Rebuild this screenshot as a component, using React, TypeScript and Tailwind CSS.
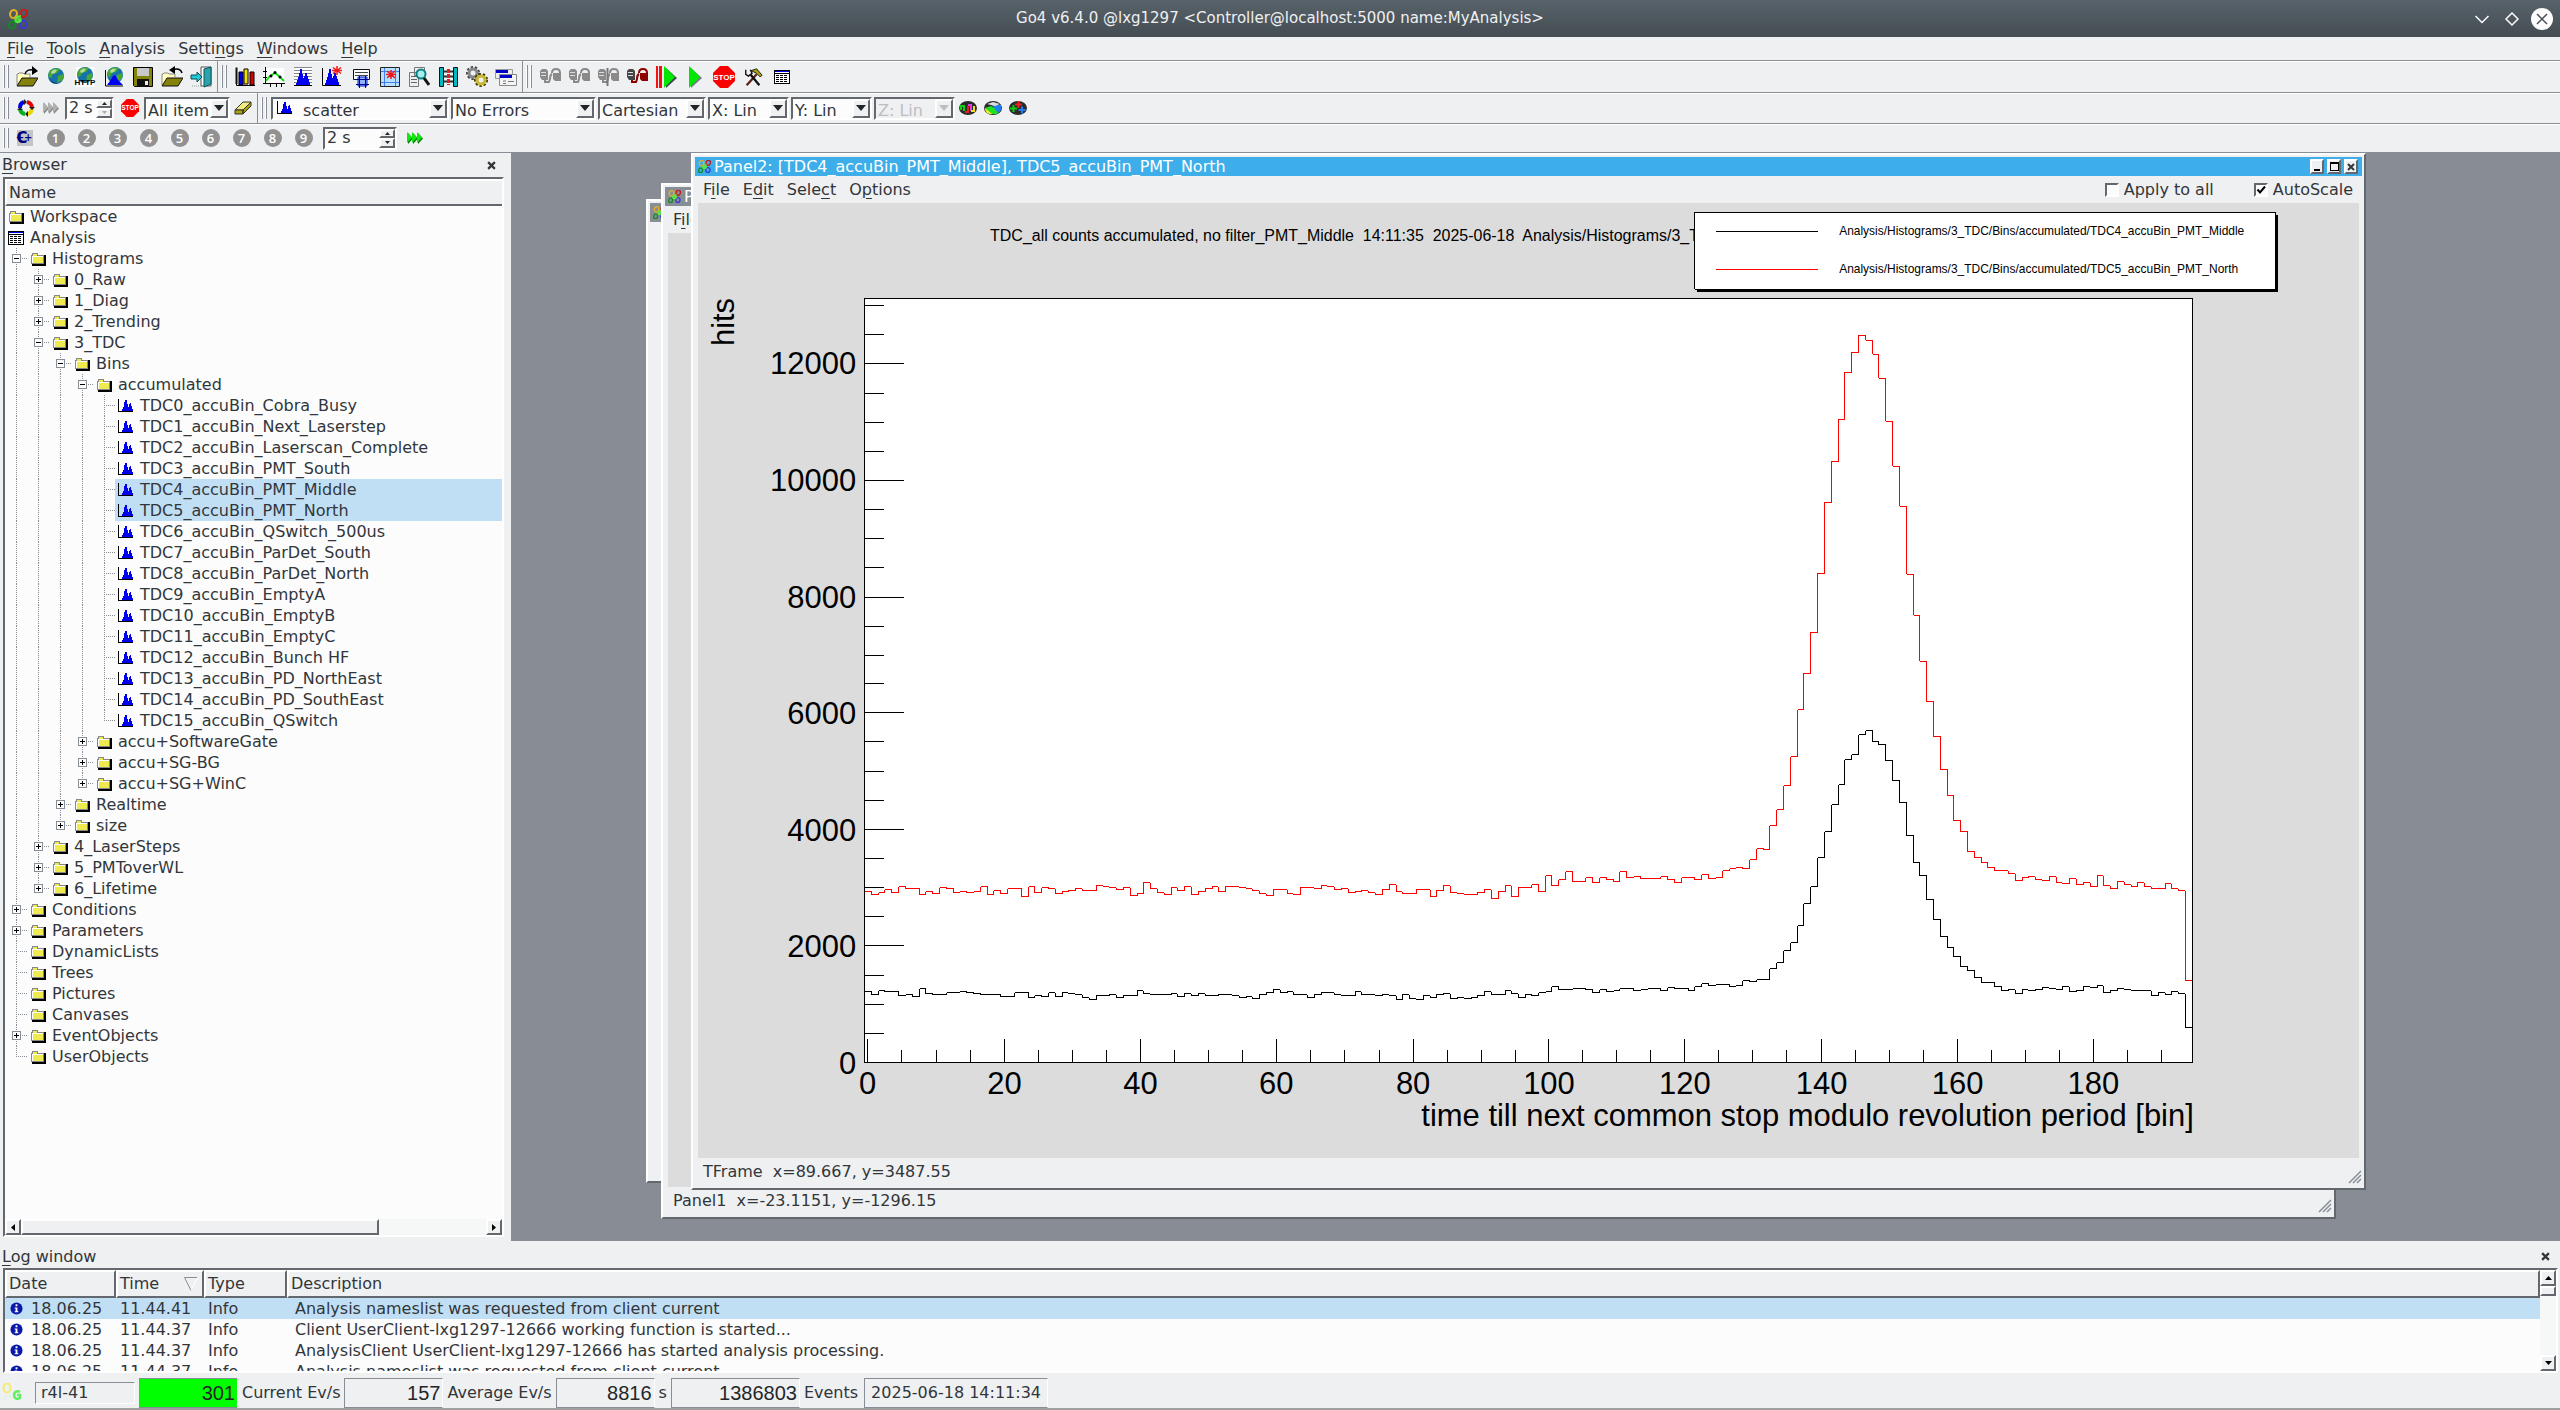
import React from 'react';
import clsx from 'clsx';

const sunken =
  'border-2 border-t-[#63686e] border-l-[#63686e] border-r-white border-b-white';
const raised =
  'border-2 border-t-white border-l-white border-r-[#63686e] border-b-[#63686e]';

/* ---------- icons ---------- */

type IconProps = { size?: number; box?: number; children: React.ReactNode };

function Icon({ size = 22, box = 22, children }: IconProps) {
  return (
    <svg width={size} height={size} viewBox={`0 0 ${box} ${box}`} className="shrink-0" aria-hidden="true">
      {children}
    </svg>
  );
}

function Go4Logo({ size = 20 }: { size?: number }) {
  return (
    <Icon size={size} box={20}>
      <g fill="none" strokeWidth="2">
        <ellipse cx="5.5" cy="5" rx="3.4" ry="4" stroke="#e8b020" transform="rotate(15 5.5 5)" />
        <ellipse cx="15.8" cy="4.2" rx="3.2" ry="3.8" stroke="#c81818" transform="rotate(20 15.8 4.2)" />
        <ellipse cx="4" cy="16" rx="3" ry="3.6" stroke="#128a22" transform="rotate(15 4 16)" />
        <ellipse cx="15.2" cy="15.5" rx="3.2" ry="3.8" stroke="#3838d8" transform="rotate(15 15.2 15.5)" />
        <path d="M13 7.500C10 7 7.500 9 7.500 11s3 3 5 1v-1.500h-3" stroke="#5ae83c" strokeWidth="2.400" />
      </g>
    </Icon>
  );
}

function OpenIcon({ back = false }: { back?: boolean }) {
  return (
    <Icon>
      <path d="M1 19V8h1l1-1h4l1 1h6v3" fill="#ffffc0" stroke="#888" />
      <path d="M1 20l5-8h16l-5 8z" fill="#84820a" stroke="#111" />
      {back ? (
        <path d="M21 7c-1-4-5-5-9-3" fill="none" stroke="#000" strokeWidth="1.500" />
      ) : (
        <path d="M9 8c1-4 5-5 9-4" fill="none" stroke="#000" strokeWidth="1.500" />
      )}
      {back ? <path d="M14 0L8 4l6 4z" /> : <path d="M16 0l6 5-6 4z" />}
    </Icon>
  );
}

function Globe({ r = 8, cx = 11, cy = 10 }: { r?: number; cx?: number; cy?: number }) {
  return (
    <g transform={`translate(${cx} ${cy}) scale(${r / 8})`}>
      <circle r="8" fill="#1672ac" />
      <path d="M-6-5C-3-8 2-8 4-6.500L1-3l-4 1-2 4-2.500-1C-8-2-7-4-6-5zM2 0l5-2c1.500 3 0 6-2 7L1 7z" fill="#46a636" />
      <path d="M-5-4C-3-7 0-7 1-6L-1-3l-3 1z" fill="#b8dc90" />
      <path d="M-6 3c2 3 5 4 8 4-3 1.500-7 0-8-4z" fill="#0d3c66" />
    </g>
  );
}

const HIST = 'M3 19h1v-2h1v-3h1v-3h1V7h1V3h2v5h1v4h1v-2h1V7h2v3h1v3h1v3h1v3z';

function HistIcon({ size = 16 }: { size?: number }) {
  return (
    <Icon size={size} box={16}>
      <g shapeRendering="crispEdges">
        <path d="M3 13h1v-2h1V9h1V4h1V2h2v4h1v3h1V6h1V5h1v3h1v3h1v2z" fill="#0000f0" />
        <path d="M0 1h1v12h14v1H0z" />
      </g>
    </Icon>
  );
}

function FolderIcon() {
  return (
    <Icon size={16} box={16}>
      <g shapeRendering="crispEdges">
        <path d="M15 4v10H2" fill="none" stroke="#000" strokeWidth="2" />
        <path d="M1.500 12.500V4.500h1V2.500h5v2h6v8z" fill="#eeea50" stroke="#888" />
        <path d="M3 5.500h10M2.500 5v7" stroke="#fff" fill="none" />
      </g>
    </Icon>
  );
}

function TableIcon() {
  return (
    <Icon size={16} box={16}>
      <g shapeRendering="crispEdges">
        <rect x=".5" y="1.500" width="15" height="13" fill="#fff" stroke="#000" />
        <path d="M1 2.500h14" stroke="#0000f0" />
        <path d="M1 4.500h14" stroke="#000" />
        <path d="M2 6.500h12M2 8.500h12M2 10.500h12M2 12.500h12" stroke="#000" strokeDasharray="3 1" />
      </g>
    </Icon>
  );
}

function StopIcon({ size = 22 }: { size?: number }) {
  return (
    <Icon size={size}>
      <path d="M7 0h8l7 7v8l-7 7H7l-7-7V7z" fill="#fa0000" />
      <text x="11" y="14" textAnchor="middle" fontSize="8" fontWeight="700" fill="#fff" fontFamily="Liberation Sans, sans-serif">
        STOP
      </text>
    </Icon>
  );
}

function Plug({ color = '#8a8a8a', plug = '#8a8a8a', bar = false }) {
  return (
    <Icon>
      <path d="M1 5l2-2h4l2 2v9H3l-2-3z" fill={color} />
      <path d="M2 6.500h5M2 9.500h5" stroke="#ddd" />
      <path d="M6 14v2h4l1-3c0-2 0-4 2-5M13 7c0-3 2-4 4-4s4 1 4 4" fill="none" stroke={plug} strokeWidth="2" />
      <path d="M14 7h8v8h-6l-2-2z" fill={plug} />
      {bar && <path d="M10.500 2v18" stroke="#777" strokeWidth="2" />}
    </Icon>
  );
}

function FastForward({ color, edge }: { color: string; edge: string }) {
  return (
    <Icon size={16} box={16}>
      {[0, 5, 10].map((x) => (
        <g key={x}>
          <path d={`M${x + 1} 3v11l5-5.500z`} fill={edge} />
          <path d={`M${x} 2v11l5-5.500z`} fill={color} />
        </g>
      ))}
    </Icon>
  );
}

function Recycle() {
  return (
    <Icon size={18} box={18}>
      <g fill="none" strokeWidth="4">
        <path d="M3 9a6 6 0 0 1 4-6" stroke="#0000e8" />
        <path d="M10 3a6 6 0 0 1 5 6" stroke="#e80000" />
        <path d="M15 10a6 6 0 0 1-5 5" stroke="#e8d800" />
        <path d="M8 15a6 6 0 0 1-5-5" stroke="#00b020" />
      </g>
      <path d="M7 0l3 3-3 3zM18 8l-3 3-3-3zM11 18l-3-3 3-3zM0 11l3-3 3 3z" fill="#222" />
    </Icon>
  );
}

function Eraser() {
  return (
    <Icon size={18} box={18}>
      <path d="M1 11L9 3h8l-8 8z" fill="#f0ec80" stroke="#333" />
      <path d="M1 11h8v4H1zM9 11l8-8v4l-8 8z" fill="#a8a010" stroke="#333" />
    </Icon>
  );
}

const fileIcons: [string, React.ReactNode][] = [
  ['Open file', <OpenIcon />],
  ['Open remote', <Icon><Globe /></Icon>],
  [
    'Open http',
    <Icon>
      <rect x="2" y="1" width="18" height="20" fill="#fff" />
      <Globe cy={9} />
      <text x="11" y="19" textAnchor="middle" fontSize="8" fontWeight="700" fontFamily="Liberation Sans, sans-serif">
        HTTP
      </text>
    </Icon>,
  ],
  [
    'Hist server',
    <Icon>
      <Globe cy={9} cx={12} />
      <path d="M4 19l3-4 3-5 2-1 3 5 5 5z" fill="#0000f0" />
      <path d="M2.500 4v16H20" fill="none" stroke="#000" />
    </Icon>,
  ],
  [
    'Save',
    <Icon>
      <path d="M1.500 1.500h19v19h-18l-1-1z" fill="#84820a" stroke="#000" />
      <path d="M5 2h12v8H5z" fill="#c8c8c8" />
      <path d="M5 13h12v8H5z" fill="#111" />
      <path d="M13 15h3v4h-3z" fill="#eee" />
    </Icon>,
  ],
  ['Close files', <OpenIcon back />],
  [
    'Exit',
    <Icon>
      <path d="M11 1h10v19H11z" fill="#fff" stroke="#555" />
      <path d="M14 3l7-2v17l-7 3z" fill="#2aa4ac" stroke="#0a555a" />
      <path d="M1 9h6V6l5 5-5 5v-3H1z" fill="#20c8d8" stroke="#05505a" />
      <path d="M2 20h9" stroke="#999" strokeDasharray="1 1" />
    </Icon>,
  ],
];

const panelIcons: [string, React.ReactNode][] = [
  [
    'New view panel',
    <Icon>
      <path d="M2.500 3v16.500H21" fill="none" stroke="#000" />
      <path d="M5 6h4v13H5z" fill="#0000e8" stroke="#000" />
      <path d="M10 3h4v15h-4z" fill="#f4e000" stroke="#000" />
      <path d="M16 6h4v13h-4z" fill="#d80000" stroke="#000" />
      <path d="M1.500 1.500h2V18h-2z" fill="#111" />
    </Icon>,
  ],
  [
    'Fit panel',
    <Icon>
      <path d="M1 2h20v15H1z" fill="#fff" />
      <path d="M2.500 1v17M0 17.500h22M0 5.500h4M0 11.500h4M7.500 17v4M13.500 17v4M18.500 17v4" stroke="#000" />
      <path d="M3 15l4-5 5-3 5 4 4 4" fill="none" stroke="#10e010" strokeWidth="2" />
      <circle cx="8" cy="10" r="1.500" />
      <circle cx="12" cy="6.500" r="1.500" />
      <circle cx="17" cy="11" r="1.500" />
    </Icon>,
  ],
  [
    'Histogram properties',
    <Icon>
      <path d="M2 1h18v18H2z" fill="#fff" />
      <path d="M2 1.500h18M2 4.500h18M2 7.500h18M2 10.500h18M2 13.500h18M2 16.500h18" stroke="#888" />
      <path d={HIST} fill="#0000f0" />
      <path d="M2 19.500h18" stroke="#000" />
    </Icon>,
  ],
  [
    'New histogram',
    <Icon>
      <path d={HIST} fill="#0000f0" />
      <path d="M1.500 2v17.500H20" fill="none" stroke="#000" />
      <path d="M16 0v9M12 1.500l8 6M20 1.500l-8 6M11 4.500h10" stroke="#f01818" strokeWidth="1.500" />
    </Icon>,
  ],
  [
    'Conditions',
    <Icon>
      <path d="M3.500 3.500h16v10h-16z" fill="#fff" stroke="#111" />
      <path d="M5 6.500h13M5 9.500h13" stroke="#444" />
      <path d="M8 11h9v9H8z" fill="#90b0f8" stroke="#0020d0" />
      <path d="M6 13.500h13M6 18.500h13M9.500 10v12M15.500 10v12" stroke="#000090" />
    </Icon>,
  ],
  [
    'New condition',
    <Icon>
      <path d="M1.500 1.500h19v19h-19z" fill="#b8e0fc" stroke="#222" />
      <path d="M5.500 2v18M16.500 2v18M2 5.500h18M2 16.500h18" stroke="#4080e8" />
      <path d="M12 4v9M8 5l8 7M16 5l-8 7M7 8.500h10" stroke="#f01818" strokeWidth="1.500" />
    </Icon>,
  ],
  [
    'Event information',
    <Icon>
      <path d="M1.500 6.500h9v14h-9zM6.500 1.500h10v8h-10z" fill="#eee" stroke="#777" />
      <path d="M3 10.500h6M3 13.500h6M3 16.500h6" stroke="#666" />
      <circle cx="13" cy="8" r="4.500" fill="#a8ecec" stroke="#0c8080" strokeWidth="2" />
      <path d="M16 12l5 7" stroke="#111" strokeWidth="3" />
    </Icon>,
  ],
  [
    'Mbs monitor',
    <Icon>
      <path d="M2.500 1.500h4v19h-4zM16.500 1.500h4v19h-4z" fill="#00b8c0" stroke="#111" />
      <path d="M7 5.500h9M7 10.500h9M7 15.500h9" stroke="#333" strokeWidth="2" />
      <path d="M11.500 3v16" stroke="#e02020" strokeWidth="3" strokeDasharray="4 1" />
    </Icon>,
  ],
  [
    'Analysis configuration',
    <Icon>
      <circle cx="7" cy="7" r="5" fill="none" stroke="#444" strokeWidth="4" strokeDasharray="2 1.500" />
      <circle cx="7" cy="7" r="4" fill="none" stroke="#888" strokeWidth="3" />
      <circle cx="15" cy="14" r="5" fill="none" stroke="#3c3804" strokeWidth="4" strokeDasharray="2 1.500" />
      <circle cx="15" cy="14" r="4" fill="none" stroke="#c8b830" strokeWidth="3" />
    </Icon>,
  ],
  [
    'User GUI',
    <Icon>
      <path d="M.5 3.500h17v9H.5z" fill="#eee" stroke="#999" />
      <path d="M1 4h12v3H1z" fill="#0000c8" />
      <path d="M4.500 8.500h17v11h-17z" fill="#f4f4f4" stroke="#888" />
      <path d="M5 9h12v3H5z" fill="#0000c8" />
      <path d="M8 15h3M8 17.500h3M13 15.500h6" stroke="#777" />
    </Icon>,
  ],
];

const analysisIcons: [string, React.ReactNode][] = [
  ['Launch analysis', <Plug />],
  ['Connect analysis', <Plug />],
  ['Prepare analysis', <Plug bar />],
  ['Shutdown analysis', <Plug color="#444" plug="#8c0000" />],
  [
    'Submit and start',
    <Icon>
      <path d="M1 0h2v22H1zM4 0h3v22H4z" fill="#f81010" />
      <path d="M11 2l11 10-11 10z" fill="#445" />
      <path d="M9 0l11 11L9 22z" fill="#00e800" />
    </Icon>,
  ],
  [
    'Start',
    <Icon>
      <path d="M7 2l11 10L7 22z" fill="#778" />
      <path d="M5 0l11 11L5 22z" fill="#00e800" />
    </Icon>,
  ],
  ['Stop', <StopIcon />],
  [
    'Configuration',
    <Icon size={20}>
      <path d="M4 20L15 8" stroke="#602010" strokeWidth="2.500" />
      <path d="M9 4l6-2 6 7-2 2-4-4z" fill="#a8a010" stroke="#111" />
      <path d="M8 8l10 12" stroke="#111" strokeWidth="2.500" />
      <path d="M3 3v5l3 2 4-3-2-4" fill="none" stroke="#111" strokeWidth="1.500" />
    </Icon>,
  ],
  ['Terminal', <TableIcon />],
];

/* ---------- small widgets ---------- */

function Handle() {
  return (
    <div className="flex shrink-0 gap-0.5 ml-[3px] py-1 self-stretch">
      <span className="w-0.5 border-l border-l-white border-r border-r-[#888e96]" />
      <span className="w-0.5 border-l border-l-white border-r border-r-[#888e96]" />
    </div>
  );
}

function IconButton({ label, wide = 'w-[29px]', children }: { label: string; wide?: string; children: React.ReactNode }) {
  return (
    <button type="button" aria-label={label} title={label} className={clsx('flex h-[26px] shrink-0 items-center justify-center', wide)}>
      {children}
    </button>
  );
}

function Combo({ label, value, width, disabled, icon }: { label: string; value: string; width: string; disabled?: boolean; icon?: boolean }) {
  return (
    <div className={clsx('relative flex h-[23px] shrink-0 items-center', sunken, width, disabled ? 'bg-[#eff0f1]' : 'bg-[#fcfcfc]')}>
      {icon && <span className="pl-1"><HistIcon /></span>}
      <select
        aria-label={label}
        disabled={disabled}
        defaultValue={value}
        className={clsx('h-full min-w-0 flex-1 appearance-none bg-transparent pr-[18px] outline-none', icon ? 'pl-2.5' : 'pl-0.5', disabled ? 'text-[#bcbec1]' : 'text-[#31363b]')}
      >
        <option>{value}</option>
      </select>
      <span className={clsx('pointer-events-none absolute inset-y-0 right-0 flex w-[18px] items-center justify-center bg-[#eff0f1]', raised)}>
        <svg width="10" height="6" viewBox="0 0 10 6" aria-hidden="true">
          <path d="M0 0h10L5 6z" fill={disabled ? '#bcbec1' : '#232629'} />
        </svg>
      </span>
    </div>
  );
}

function Spin({ label, width, stuck }: { label: string; width: string; stuck?: boolean }) {
  return (
    <div className={clsx('flex h-[23px] shrink-0 bg-[#fcfcfc]', sunken, width)}>
      <input type="text" aria-label={label} defaultValue="2 s" className="min-w-0 flex-1 bg-transparent pl-0.5 outline-none" />
      <div className="flex w-4 flex-col">
        <button type="button" aria-label="Increase" className={clsx('flex flex-1 items-center justify-center bg-[#eff0f1]', raised)}>
          <svg width="5" height="3" viewBox="0 0 5 3"><path d="M0 3h5L2.500 0z" fill="#232629" /></svg>
        </button>
        <button type="button" aria-label="Decrease" className={clsx('flex flex-1 items-center justify-center bg-[#eff0f1]', raised)}>
          <svg width="5" height="3" viewBox="0 0 5 3"><path d="M0 0h5L2.500 3z" fill={stuck ? '#aaa' : '#232629'} /></svg>
        </button>
      </div>
    </div>
  );
}

function Mnemonic({ text, at }: { text: string; at: number }) {
  return (
    <>
      {text.slice(0, at)}
      <span className="underline decoration-1 underline-offset-3">{text[at]}</span>
      {text.slice(at + 1)}
    </>
  );
}

function MenuBar({ items }: { items: [string, number][] }) {
  return (
    <nav className="flex items-center gap-px pl-px">
      {items.map(([text, at]) => (
        <button key={text} type="button" className="px-1.5 leading-5">
          <Mnemonic text={text} at={at} />
        </button>
      ))}
    </nav>
  );
}

function CloseX({ label }: { label: string }) {
  return (
    <button type="button" aria-label={label} className="flex size-4 items-center justify-center">
      <svg width="9" height="9" viewBox="0 0 8 8"><path d="M1 1l6 6M7 1L1 7" stroke="#31363b" strokeWidth="2" /></svg>
    </button>
  );
}

/* ---------- browser tree ---------- */

type Node = { name: string; more?: boolean; hist?: boolean; selected?: boolean; table?: boolean; children?: Node[] };

const leaves = [
  'TDC0_accuBin_Cobra_Busy', 'TDC1_accuBin_Next_Laserstep', 'TDC2_accuBin_Laserscan_Complete', 'TDC3_accuBin_PMT_South',
  'TDC4_accuBin_PMT_Middle', 'TDC5_accuBin_PMT_North', 'TDC6_accuBin_QSwitch_500us', 'TDC7_accuBin_ParDet_South',
  'TDC8_accuBin_ParDet_North', 'TDC9_accuBin_EmptyA', 'TDC10_accuBin_EmptyB', 'TDC11_accuBin_EmptyC',
  'TDC12_accuBin_Bunch HF', 'TDC13_accuBin_PD_NorthEast', 'TDC14_accuBin_PD_SouthEast', 'TDC15_accuBin_QSwitch',
];

const tree: Node[] = [
  { name: 'Workspace' },
  {
    name: 'Analysis',
    table: true,
    children: [
      {
        name: 'Histograms',
        children: [
          { name: '0_Raw', more: true },
          { name: '1_Diag', more: true },
          { name: '2_Trending', more: true },
          {
            name: '3_TDC',
            children: [
              {
                name: 'Bins',
                children: [
                  { name: 'accumulated', children: leaves.map((name, i) => ({ name, hist: true, selected: i === 4 || i === 5 })) },
                  { name: 'accu+SoftwareGate', more: true },
                  { name: 'accu+SG-BG', more: true },
                  { name: 'accu+SG+WinC', more: true },
                ],
              },
              { name: 'Realtime', more: true },
              { name: 'size', more: true },
            ],
          },
          { name: '4_LaserSteps', more: true },
          { name: '5_PMToverWL', more: true },
          { name: '6_Lifetime', more: true },
        ],
      },
      { name: 'Conditions', more: true },
      { name: 'Parameters', more: true },
      { name: 'DynamicLists' },
      { name: 'Trees' },
      { name: 'Pictures' },
      { name: 'Canvases' },
      { name: 'EventObjects', more: true },
      { name: 'UserObjects' },
    ],
  },
];

function TreeRows({ nodes, guides, root }: { nodes: Node[]; guides: boolean[]; root?: boolean }) {
  return (
    <>
      {nodes.map((node, i) => {
        const last = i === nodes.length - 1;
        const box = !root && (node.more || node.children);
        return (
          <React.Fragment key={node.name}>
            <li className="flex h-[21px]">
              {guides.map((on, g) => (
                <span key={g} className="flex w-[22px] shrink-0 pl-[11px]">
                  {on && <span className="border-l border-dotted border-[#888e96]" />}
                </span>
              ))}
              {!root && (
                <span className="relative w-[22px] shrink-0">
                  <span className={clsx('absolute top-0 left-[11px] border-l border-dotted border-[#888e96]', last ? 'h-[11px]' : 'h-full')} />
                  <span className="absolute top-2.5 left-[11px] w-[11px] border-t border-dotted border-[#888e96]" />
                  {box && (
                    <svg width="9" height="9" viewBox="0 0 9 9" className="absolute top-1.5 left-[7px]" shapeRendering="crispEdges">
                      <rect x=".5" y=".5" width="8" height="8" fill="#fcfcfc" stroke="#888e96" />
                      <path d={node.more ? 'M2 4.500h5M4.500 2v5' : 'M2 4.500h5'} stroke="#000" />
                    </svg>
                  )}
                </span>
              )}
              <span className={clsx('flex flex-1 items-center gap-1.5 pl-[3px] leading-[21px]', node.selected && 'bg-[#c1dff4]')}>
                {node.hist ? <HistIcon /> : node.table ? <TableIcon /> : <FolderIcon />}
                {node.name}
              </span>
            </li>
            {node.children && <TreeRows nodes={node.children} guides={root ? [] : [...guides, !last]} />}
          </React.Fragment>
        );
      })}
    </>
  );
}

function Browser() {
  return (
    <aside className="flex w-[511px] shrink-0 flex-col pb-1">
      <div className="flex h-6 items-center justify-between pr-3 pl-0.5">
        <h2><Mnemonic text="Browser" at={0} /></h2>
        <CloseX label="Close browser" />
      </div>
      <div className={clsx('mr-[7px] ml-[3px] flex min-h-0 flex-1 flex-col bg-[#fcfcfc]', sunken)}>
        <div className={clsx('h-[27px] bg-[#eff0f1] pl-0.5 leading-6', raised, 'border-r-0')}>Name</div>
        <ul className="min-h-0 flex-1 overflow-hidden">
          <TreeRows nodes={tree} guides={[]} root />
        </ul>
        <div className="flex h-4 bg-[#f6f7f7]">
          <button type="button" aria-label="Scroll left" className={clsx('flex w-4 items-center justify-center bg-[#eff0f1]', raised)}>
            <svg width="4" height="7" viewBox="0 0 4 7"><path d="M4 0v7L0 3.500z" /></svg>
          </button>
          <div className="flex flex-1">
            <span className={clsx('w-[77%] bg-[#eff0f1]', raised)} />
          </div>
          <button type="button" aria-label="Scroll right" className={clsx('flex w-4 items-center justify-center bg-[#eff0f1]', raised)}>
            <svg width="4" height="7" viewBox="0 0 4 7"><path d="M0 0v7l4-3.500z" /></svg>
          </button>
        </div>
      </div>
    </aside>
  );
}

/* ---------- chart ---------- */

// bin contents, one step is 17.15 counts
const north = [
  171, 168, 170, 173, 170, 176, 174, 174, 168, 171, 169, 175, 174, 170, 171, 170, 171, 176, 168, 172, 169, 174, 174, 166, 176,
  170, 175, 174, 169, 171, 172, 174, 172, 172, 177, 176, 175, 173, 175, 167, 169, 180, 174, 170, 168, 175, 172, 176, 168, 171,
  174, 176, 171, 176, 176, 175, 174, 172, 169, 167, 173, 173, 169, 168, 175, 175, 174, 177, 176, 173, 174, 170, 171, 172, 170,
  168, 173, 178, 171, 169, 169, 173, 173, 166, 172, 177, 170, 169, 168, 168, 170, 173, 164, 171, 177, 166, 175, 175, 178, 171,
  187, 177, 183, 191, 181, 181, 185, 180, 185, 183, 181, 191, 185, 186, 184, 184, 184, 186, 183, 180, 185, 185, 183, 188, 184,
  185, 192, 194, 195, 194, 203, 214, 213, 237, 253, 277, 306, 353, 390, 431, 490, 561, 602, 644, 691, 711, 728, 723, 709, 685,
  642, 597, 557, 489, 448, 402, 361, 326, 293, 267, 242, 231, 211, 205, 200, 195, 192, 192, 189, 182, 185, 186, 183, 182, 186,
  180, 179, 184, 178, 180, 176, 187, 177, 174, 181, 178, 176, 180, 176, 174, 174, 179, 174, 172, 82,
];

const middle = [
  71, 68, 72, 71, 71, 67, 68, 66, 74, 69, 68, 68, 70, 70, 71, 70, 69, 68, 68, 68, 66, 66, 70, 70, 65,
  67, 66, 70, 66, 70, 69, 68, 65, 63, 67, 67, 68, 65, 67, 67, 72, 69, 68, 68, 68, 69, 66, 69, 67, 69,
  67, 67, 68, 68, 67, 65, 66, 64, 68, 70, 73, 70, 71, 68, 68, 65, 68, 70, 70, 68, 67, 67, 71, 68, 68,
  67, 68, 67, 63, 68, 64, 63, 67, 65, 68, 69, 64, 65, 64, 65, 67, 71, 68, 68, 72, 69, 65, 68, 67, 70,
  71, 76, 73, 73, 74, 74, 73, 70, 73, 71, 72, 74, 74, 72, 73, 74, 74, 72, 75, 74, 74, 72, 76, 79, 77,
  78, 78, 76, 77, 82, 81, 83, 83, 94, 100, 112, 120, 137, 159, 176, 205, 231, 258, 278, 303, 308, 328, 332, 321, 318,
  302, 282, 260, 227, 200, 187, 163, 143, 126, 115, 106, 96, 92, 85, 80, 80, 76, 72, 73, 69, 73, 72, 73, 75, 74,
  73, 76, 71, 72, 76, 75, 77, 70, 72, 74, 73, 72, 72, 72, 67, 70, 68, 71, 69, 35,
];

const LEFT = 166;
const TOP = 95;
const BASE = 860;
const BIN = 6.815;
const binX = (n: number) => Math.round(LEFT + n * BIN) + 0.5;
const countY = (n: number) => Math.round(BASE - n * 0.0583) + 0.5;

function steps(bins: number[]) {
  return 'M' + bins.map((h, i) => `${binX(i)} ${BASE + 0.5 - h}H${binX(i + 1)}`).join('L');
}

function Chart() {
  const xTicks = Array.from({ length: 39 }, (_, i) => i * 5);
  const yTicks = Array.from({ length: 27 }, (_, i) => i * 500);
  return (
    <svg viewBox="0 0 1662 956" className="h-full w-full bg-[#dcdcdc] font-['Liberation_Sans',Arial,sans-serif]">
      <g fill="none" stroke="#000" shapeRendering="crispEdges">
        <rect x={LEFT + 0.5} y={TOP + 0.5} width={binX(195) - LEFT - 0.5} height={BASE - TOP} fill="#fff" />
        {xTicks.map((t) => (
          <path key={t} d={`M${binX(t + 0.5)} ${BASE}v${t % 20 ? -12 : -23}`} />
        ))}
        {yTicks.map((t) => (
          <path key={t} d={`M${LEFT} ${countY(t)}h${t % 2000 ? 20 : 40}`} />
        ))}
        <path d={steps(middle)} />
        <path d={steps(north)} stroke="#f00" />
      </g>

      <g fontSize="31">
        {xTicks.filter((t) => t % 20 === 0).map((t) => (
          <text key={t} x={binX(t + 0.5)} y="892" textAnchor="middle">{t}</text>
        ))}
        {yTicks.filter((t) => t % 2000 === 0).map((t) => (
          <text key={t} x="158" y={countY(t) + 11} textAnchor="end">{t}</text>
        ))}
        <text x="1497" y="924" textAnchor="end">time till next common stop modulo revolution period [bin]</text>
        <text transform="translate(36 95) rotate(-90)" textAnchor="end">hits</text>
      </g>

      <text x="292" y="38" fontSize="16" className="whitespace-pre">
        {'TDC_all counts accumulated, no filter_PMT_Middle  14:11:35  2025-06-18  Analysis/Histograms/3_TDC'}
      </text>

      <g shapeRendering="crispEdges">
        <path d="M1000 12h581v77h-581z" />
        <path d="M997.500 9.500h581v77h-581z" fill="#fff" stroke="#000" />
        <path d="M1019 28.500h102" stroke="#000" />
        <path d="M1019 66.500h102" stroke="#f00" />
      </g>
      <g fontSize="12">
        <text x="1142" y="32">Analysis/Histograms/3_TDC/Bins/accumulated/TDC4_accuBin_PMT_Middle</text>
        <text x="1142" y="70">Analysis/Histograms/3_TDC/Bins/accumulated/TDC5_accuBin_PMT_North</text>
      </g>
    </svg>
  );
}

/* ---------- mdi windows ---------- */

const panelMenu: [string, number][] = [['File', 1], ['Edit', 1], ['Select', 4], ['Options', 1]];

function Check({ label, checked }: { label: string; checked?: boolean }) {
  return (
    <label className="flex items-center gap-[5px]">
      <span className="relative flex">
        <input type="checkbox" defaultChecked={checked} className={clsx('peer size-3.5 appearance-none bg-[#fcfcfc]', sunken)} />
        <svg width="14" height="14" viewBox="0 0 14 14" className="pointer-events-none absolute inset-0 hidden peer-checked:block">
          <path d="M3.500 6.500L6 9.500l5-6" fill="none" stroke="#000" strokeWidth="2" />
        </svg>
      </span>
      {label}
    </label>
  );
}

type PanelProps = { place: string; title: string; status?: string; active?: boolean; children?: React.ReactNode };

function Panel({ place, title, status, active, children }: PanelProps) {
  return (
    <section className={clsx('absolute flex w-[1675px] flex-col bg-[#eff0f1] p-0.5', raised, place)}>
      <header className={clsx('flex h-[19px] shrink-0 items-center gap-[3px] pr-1 pl-[3px] text-white', active ? 'bg-[#3daee9]' : 'bg-[#888e96]')}>
        <Go4Logo size={13} />
        <span className="flex-1 overflow-hidden leading-[19px] whitespace-nowrap">{title}</span>
        <button type="button" aria-label="Minimize" className={clsx('flex h-[15px] w-3.5 items-end justify-center bg-[#eff0f1] pb-px', raised)}>
          <span className="h-0.5 w-1.5 bg-black" />
        </button>
        <button type="button" aria-label="Maximize" className={clsx('flex h-[15px] w-3.5 items-center justify-center bg-[#eff0f1]', raised)}>
          <span className="size-[9px] border border-t-2 border-black" />
        </button>
        <button type="button" aria-label="Close" className={clsx('flex h-[15px] w-3.5 items-center justify-center bg-[#eff0f1]', raised)}>
          <svg width="8" height="8" viewBox="0 0 8 8"><path d="M1 1l6 6M7 1L1 7" stroke="#31363b" strokeWidth="2" /></svg>
        </button>
      </header>
      {status && (
        <div className="flex h-[27px] shrink-0 items-center justify-between pr-[9px] pl-px">
          <MenuBar items={panelMenu} />
          <div className="flex gap-10">
            <Check label="Apply to all" />
            <Check label="AutoScale" checked />
          </div>
        </div>
      )}
      {status && <div className="mx-[3px] min-h-0 flex-1 bg-[#dcdcdc]">{children}</div>}
      {status && (
        <footer className="flex h-7 shrink-0 items-end justify-between pl-2">
          <span className="self-center whitespace-pre">{status}</span>
          <svg width="14" height="14" viewBox="0 0 14 14" className="mb-0.5">
            <path d="M1 13L13 1M5 13l8-8M9 13l4-4" stroke="#888e96" strokeWidth="1.500" />
          </svg>
        </footer>
      )}
    </section>
  );
}

/* ---------- log window ---------- */

const log = [
  ['18.06.25', '11.44.41', 'Info', 'Analysis nameslist was requested from client current'],
  ['18.06.25', '11.44.37', 'Info', 'Client UserClient-lxg1297-12666 working function is started...'],
  ['18.06.25', '11.44.37', 'Info', 'AnalysisClient UserClient-lxg1297-12666 has started analysis processing.'],
  ['18.06.25', '11.44.37', 'Info', 'Analysis nameslist was requested from client current'],
];

function InfoIcon() {
  return (
    <Icon size={13} box={14}>
      <circle cx="7" cy="7" r="6.500" fill="#0a18a8" />
      <path d="M6 2.500h2v2H6zM5 6h3v4h1v1H5v-1h1V7H5z" fill="#fff" />
    </Icon>
  );
}

function LogWindow() {
  const head = clsx('h-[27px] bg-[#eff0f1] pl-0.5 text-left font-normal', raised);
  return (
    <section className="flex h-[136px] shrink-0 flex-col pb-1">
      <div className="flex h-[27px] items-center justify-between pt-1 pr-[7px] pl-0.5">
        <h2><Mnemonic text="Log window" at={0} /></h2>
        <CloseX label="Close log window" />
      </div>
      <div className={clsx('mr-0.5 ml-[3px] flex min-h-0 flex-1 bg-[#fcfcfc]', sunken)}>
        <div className="min-w-0 flex-1 overflow-hidden">
          <table className="w-full table-fixed border-separate border-spacing-0">
            <thead>
              <tr>
                <th className={clsx(head, 'w-[111px]')}>Date</th>
                <th className={clsx(head, 'w-[88px]')}>
                  <span className="flex items-center justify-between pr-1">
                    Time
                    <svg width="14" height="14" viewBox="0 0 14 14"><path d="M13 .500H.500L7 13.500" fill="none" stroke="#888e96" /><path d="M7 13.500L13.500 1" stroke="#fff" /></svg>
                  </span>
                </th>
                <th className={clsx(head, 'w-[83px]')}>Type</th>
                <th className={head}>Description</th>
              </tr>
            </thead>
            <tbody>
              {log.map(([date, time, type, text], i) => (
                <tr key={i} className={clsx('h-[21px] leading-[21px]', i === 0 && 'bg-[#c1dff4]')}>
                  <td className="p-0">
                    <span className="flex items-center gap-2 pl-[5px]"><InfoIcon />{date}</span>
                  </td>
                  <td className="p-0 pl-1">{time}</td>
                  <td className="p-0 pl-1">{type}</td>
                  <td className="p-0 pl-2">{text}</td>
                </tr>
              ))}
            </tbody>
          </table>
        </div>
        <div className="flex w-4 flex-col bg-[#f6f7f7]">
          <button type="button" aria-label="Scroll up" className={clsx('flex h-4 shrink-0 items-center justify-center bg-[#eff0f1]', raised)}>
            <svg width="7" height="4" viewBox="0 0 7 4"><path d="M0 4h7L3.500 0z" /></svg>
          </button>
          <div className="flex flex-1 flex-col">
            <span className={clsx('h-2.5 bg-[#eff0f1]', raised)} />
          </div>
          <button type="button" aria-label="Scroll down" className={clsx('flex h-4 shrink-0 items-center justify-center bg-[#eff0f1]', raised)}>
            <svg width="7" height="4" viewBox="0 0 7 4"><path d="M0 0h7L3.500 4z" /></svg>
          </button>
        </div>
      </div>
    </section>
  );
}

/* ---------- status bar ---------- */

function Lcd({ value, width, on }: { value: string; width: string; on?: boolean }) {
  return (
    <output
      className={clsx(
        "flex h-[30px] shrink-0 items-center justify-end border border-t-[#888e96] border-l-[#888e96] border-r-white border-b-[#888e96] pr-0.5 font-['Liberation_Sans',Arial,sans-serif] text-xl text-[#232629]",
        width,
        on && 'bg-[#00ff00]',
      )}
    >
      {value}
    </output>
  );
}

function StatusBar() {
  return (
    <footer className="flex h-[33px] shrink-0 items-center gap-1 border-b-2 border-b-[#a0a0a0]">
      <div className="mr-2.5 ml-0.5 flex w-[19px]">
        <Icon size={20} box={20}>
          <ellipse cx="5" cy="5" rx="3.500" ry="4.500" fill="none" stroke="#f4ec70" strokeWidth="2" />
          <path d="M18 9c-3-2-6 0-6 3s3 5 6 3v-3h-3" fill="none" stroke="#60f060" strokeWidth="2.500" />
          <ellipse cx="6" cy="16" rx="3" ry="3.500" fill="none" stroke="#dff4df" />
        </Icon>
      </div>
      <span className="w-[100px] border border-t-[#888e96] border-l-[#888e96] border-r-white border-b-white pl-[5px] leading-5">r4l-41</span>
      <Lcd value="301" width="w-[99px]" on />
      <span>Current Ev/s</span>
      <Lcd value="157" width="w-[99px]" />
      <span>Average Ev/s</span>
      <Lcd value="8816" width="w-[99px]" />
      <span>s</span>
      <Lcd value="1386803" width="w-[129px]" />
      <span className="mr-0.5">Events</span>
      <span className="flex h-[30px] items-center border border-t-[#888e96] border-l-[#888e96] border-r-white border-b-[#888e96] px-1.5">
        2025-06-18 14:11:34
      </span>
    </footer>
  );
}

/* ---------- main window ---------- */

const bar = 'flex shrink-0 items-stretch border-b border-[#888e96] shadow-[inset_0_1px_0_#fff]';

export default function App() {
  return (
    <div className="flex h-screen min-h-[900px] w-full flex-col overflow-hidden bg-[#eff0f1] font-['DejaVu_Sans',sans-serif] text-base text-[#31363b]">
      <header className="relative flex h-[37px] shrink-0 items-center justify-center bg-linear-to-b from-[#58626a] to-[#444d53] text-[#eff0f1]">
        <span className="absolute left-2"><Go4Logo /></span>
        <h1 className="text-[15px]">Go4 v6.4.0 @lxg1297 &lt;Controller@localhost:5000 name:MyAnalysis&gt;</h1>
        <div className="absolute right-[7px] flex gap-2">
          <button type="button" aria-label="Minimize">
            <Icon><path d="M4.500 8l6.500 6.500L17.500 8" fill="none" stroke="#fcfcfc" strokeWidth="1.500" /></Icon>
          </button>
          <button type="button" aria-label="Maximize">
            <Icon><path d="M11 5l6 6-6 6-6-6z" fill="none" stroke="#fcfcfc" strokeWidth="1.500" /></Icon>
          </button>
          <button type="button" aria-label="Close">
            <Icon>
              <circle cx="11" cy="11" r="11" fill="#fcfcfc" />
              <path d="M6 6l10 10M16 6L6 16" stroke="#475057" strokeWidth="1.500" />
            </Icon>
          </button>
        </div>
      </header>

      <div className="flex h-6 shrink-0 items-center border-b border-[#888e96]">
        <MenuBar items={[['File', 0], ['Tools', 0], ['Analysis', 0], ['Settings', 5], ['Windows', 0], ['Help', 0]]} />
      </div>

      <div className={clsx(bar, 'h-8')}>
        {[fileIcons, panelIcons, analysisIcons].map((group, i) => (
          <div key={i} className={clsx('flex items-center pr-0.5', i < 2 && 'border-r border-[#888e96]')}>
            <Handle />
            <div className="flex pl-[3px]">
              {group.map(([label, icon]) => (
                <IconButton key={label} label={label}>{icon}</IconButton>
              ))}
            </div>
          </div>
        ))}
      </div>

      <div className={clsx(bar, 'h-[31px]')}>
        <div className="flex items-center border-r border-[#888e96] pr-0.5">
          <Handle />
          <div className="flex items-center pl-1">
            <IconButton label="Update" wide="w-[25px]"><Recycle /></IconButton>
            <IconButton label="Monitor" wide="w-[25px]"><FastForward color="#b0b0b0" edge="#888" /></IconButton>
            <div className="px-0.5"><Spin label="Monitor interval" width="w-[49px]" stuck /></div>
            <IconButton label="Stop monitoring" wide="w-7"><StopIcon size={18} /></IconButton>
            <Combo label="Items" value="All item" width="w-[86px]" />
            <IconButton label="Clear" wide="w-[25px]"><Eraser /></IconButton>
          </div>
        </div>
        <div className="flex items-center">
          <Handle />
          <div className="flex items-center gap-0.5 pl-1">
            <Combo label="Draw style" value="scatter" width="w-[178px]" icon />
            <Combo label="Errors" value="No Errors" width="w-[145px]" />
            <Combo label="Coordinates" value="Cartesian" width="w-[108px]" />
            <Combo label="X scale" value="X: Lin" width="w-[81px]" />
            <Combo label="Y scale" value="Y: Lin" width="w-[81px]" />
            <Combo label="Z scale" value="Z: Lin" width="w-[81px]" disabled />
          </div>
          <IconButton label="Superimpose" wide="w-[25px]">
            <Icon size={18} box={18}>
              <ellipse cx="9" cy="9" rx="9" ry="7" fill="#2a2a2a" />
              <g fill="none" strokeWidth="2">
                <path d="M2 11V7h3v5" stroke="#10d010" />
                <path d="M6 13h3V7" stroke="#e02020" />
                <path d="M9 6h3v6" stroke="#e040e0" />
                <path d="M12 12h3V7" stroke="#e8e020" />
              </g>
            </Icon>
          </IconButton>
          <IconButton label="Palette" wide="w-[25px]">
            <Icon size={18} box={18}>
              <ellipse cx="9" cy="9" rx="9" ry="7" fill="#2a2a2a" />
              <path d="M1 9l6-2 9 5-3 3H6z" fill="#20e020" />
              <path d="M1 9l7 6H6c-3 0-5-3-5-6z" fill="#f8f020" />
              <path d="M8 6l9 0v5l-3 3z" fill="#2080f0" />
              <path d="M3 5l6-2 7 2-5 2z" fill="#ddd" />
            </Icon>
          </IconButton>
          <IconButton label="Markers" wide="w-[25px]">
            <Icon size={18} box={18}>
              <ellipse cx="9" cy="9" rx="9" ry="7" fill="#2a2a2a" />
              <path d="M4.500 6v7M1 9.500h7" stroke="#10d010" strokeWidth="2" />
              <path d="M9.500 2v7M6 5.500h7" stroke="#f02020" strokeWidth="2" />
              <path d="M13 7.500v7M9.500 11h7" stroke="#2080f0" strokeWidth="2" />
            </Icon>
          </IconButton>
        </div>
      </div>

      <div className={clsx(bar, 'h-[29px]')}>
        <Handle />
        <div className="flex items-center">
          <IconButton label="Command" wide="w-[31px]">
            <span className="relative flex size-4 items-center bg-[#c4c4c4] text-[15px] leading-4 font-bold text-[#00007c]">
              C<span className="absolute right-0 text-[10px]">++</span>
            </span>
          </IconButton>
          {[1, 2, 3, 4, 5, 6, 7, 8, 9].map((n) => (
            <IconButton key={n} label={`Command ${n}`} wide="w-[31px]">
              <span className="flex size-[18px] items-center justify-center rounded-full bg-[#919191] font-['Open_Sans',sans-serif] text-[13px] leading-[18px] font-semibold text-white">
                {n}
              </span>
            </IconButton>
          ))}
          <div className="pl-1"><Spin label="Command interval" width="w-[74px]" /></div>
          <IconButton label="Run command" wide="w-9"><FastForward color="#10e810" edge="#077807" /></IconButton>
        </div>
      </div>

      <main className="flex min-h-0 flex-1">
        <Browser />
        <div className="relative min-w-0 flex-1 overflow-hidden bg-[#888d95]">
          <Panel place="left-[135px] top-[46px] h-[984px]" title="" />
          <Panel place="left-[150px] top-[30px] h-[1036px]" title="Panel1" status="Panel1  x=-23.1151, y=-1296.15" />
          <Panel
            place="left-[180px] top-0 h-[1037px]"
            title="Panel2: [TDC4_accuBin_PMT_Middle], TDC5_accuBin_PMT_North"
            status="TFrame  x=89.667, y=3487.55"
            active
          >
            <Chart />
          </Panel>
        </div>
      </main>

      <LogWindow />
      <StatusBar />
    </div>
  );
}
